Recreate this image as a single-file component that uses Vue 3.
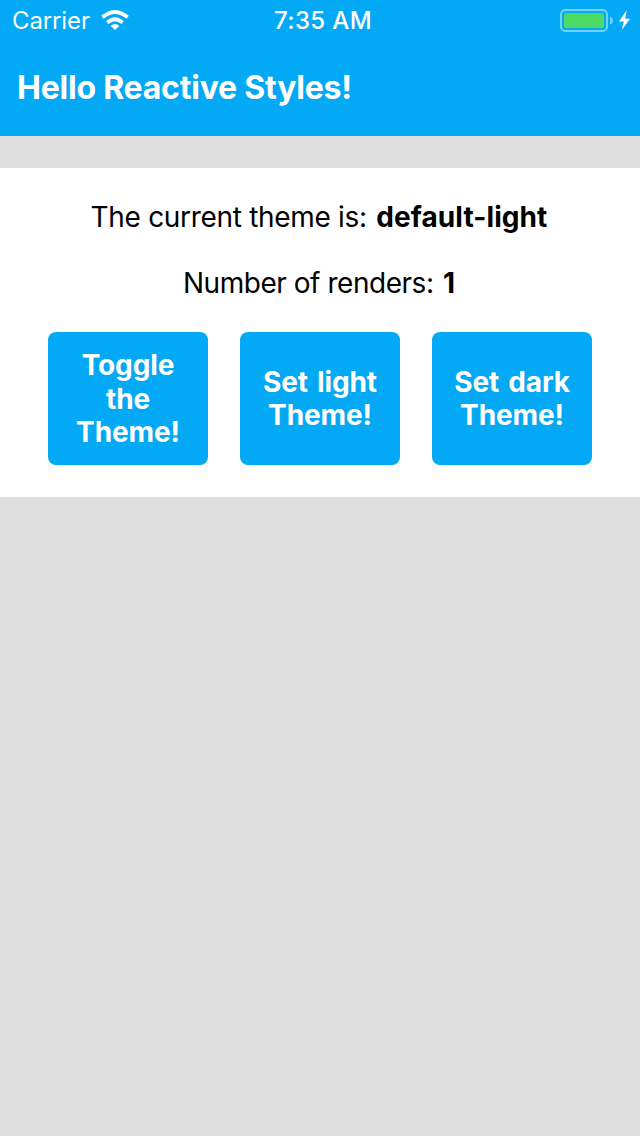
<script setup>
const actions = [
  { cls: 'toggle', lines: ['Toggle', 'the', 'Theme!'] },
  { cls: 'light', lines: ['Set light', 'Theme!'] },
  { cls: 'dark', lines: ['Set dark', 'Theme!'] }
]
</script>

<template>
  <div class="screen">
    <header class="top">
      <div class="status">
        <div class="left">
          <span class="carrier">Carrier</span>
          <svg class="wifi" width="28" height="20" viewBox="0 0 28 20">
            <path d="M14 20 L9.7 15.9 Q14 12.2 18.3 15.9 Z" fill="#fff" />
            <path d="M6.4 12.6 Q14 5.9 21.6 12.6" fill="none" stroke="#fff" stroke-width="3.8" />
            <path d="M1.4 7.3 Q14 -3.4 26.6 7.3" fill="none" stroke="#fff" stroke-width="3.8" />
          </svg>
        </div>
        <span class="time">7:35 AM</span>
        <svg class="battery" width="72" height="24" viewBox="0 0 72 24">
          <rect x="1" y="2" width="46" height="21" rx="4.5" fill="none" stroke="#fff" stroke-opacity=".45" stroke-width="2" />
          <rect x="4" y="5" width="40" height="15" rx="1.5" fill="#4cd964" />
          <path d="M50 8.5 Q53 9.5 53 12.5 Q53 15.5 50 16.5 Z" fill="#fff" fill-opacity=".45" />
          <path d="M66.8 2 L59 13.5 H63.8 L61.8 22 L70 10.8 H65.2 Z" fill="#fff" />
        </svg>
      </div>
      <h1>Hello Reactive Styles!</h1>
    </header>
    <main class="panel">
      <p class="theme">The current theme is: <b>default-light</b></p>
      <p class="renders">Number of renders: <b>1</b></p>
      <div class="actions">
        <button v-for="a in actions" :key="a.cls" :class="a.cls">
          <span v-for="l in a.lines" :key="l">{{ l }}</span>
        </button>
      </div>
    </main>
  </div>
</template>

<style>
body { background: #dedede; }
</style>
<style scoped>
.screen { width: 640px; height: 1136px; background: #dedede; font-family: Inter, "Liberation Sans", sans-serif; overflow: hidden; }
.top { height: 136px; background: #03a9f4; color: #fff; }
.status { height: 40px; display: grid; grid-template-columns: 1fr auto 1fr; align-items: center; padding: 0 8px 0 12px; font-size: 24px; }
.left { display: flex; align-items: center; gap: 11px; }
.carrier { letter-spacing: -0.12px; padding-top: 1px; }
.time { font-weight: 500; letter-spacing: 0.35px; padding: 1px 0 0 2px; }
.battery { justify-self: end; }
h1 { margin: 0; height: 96px; padding-left: 17px; font-size: 32px; line-height: 96px; font-weight: 650; letter-spacing: -0.22px; }
.panel { margin-top: 32px; height: 329px; background: #fff; box-sizing: border-box; padding: 32px 48px; }
p { margin: 0 0 32px; padding-right: 2px; height: 34px; line-height: 34px; font-size: 28px; text-align: center; white-space: nowrap; color: #000; letter-spacing: -0.31px; }
p b { margin-left: 2px; letter-spacing: 0.08px; }
.renders { letter-spacing: -0.46px; }
.actions { display: grid; grid-template-columns: repeat(3, 160px); gap: 32px; height: 133px; }
button { display: flex; flex-direction: column; justify-content: center; align-items: center; border: 0; padding: 1.5px 0 0; border-radius: 8px; background: #03a9f4; color: #fff; font: 650 28px/33.5px Inter, sans-serif; letter-spacing: -0.1px; word-spacing: 2.5px; }
</style>
